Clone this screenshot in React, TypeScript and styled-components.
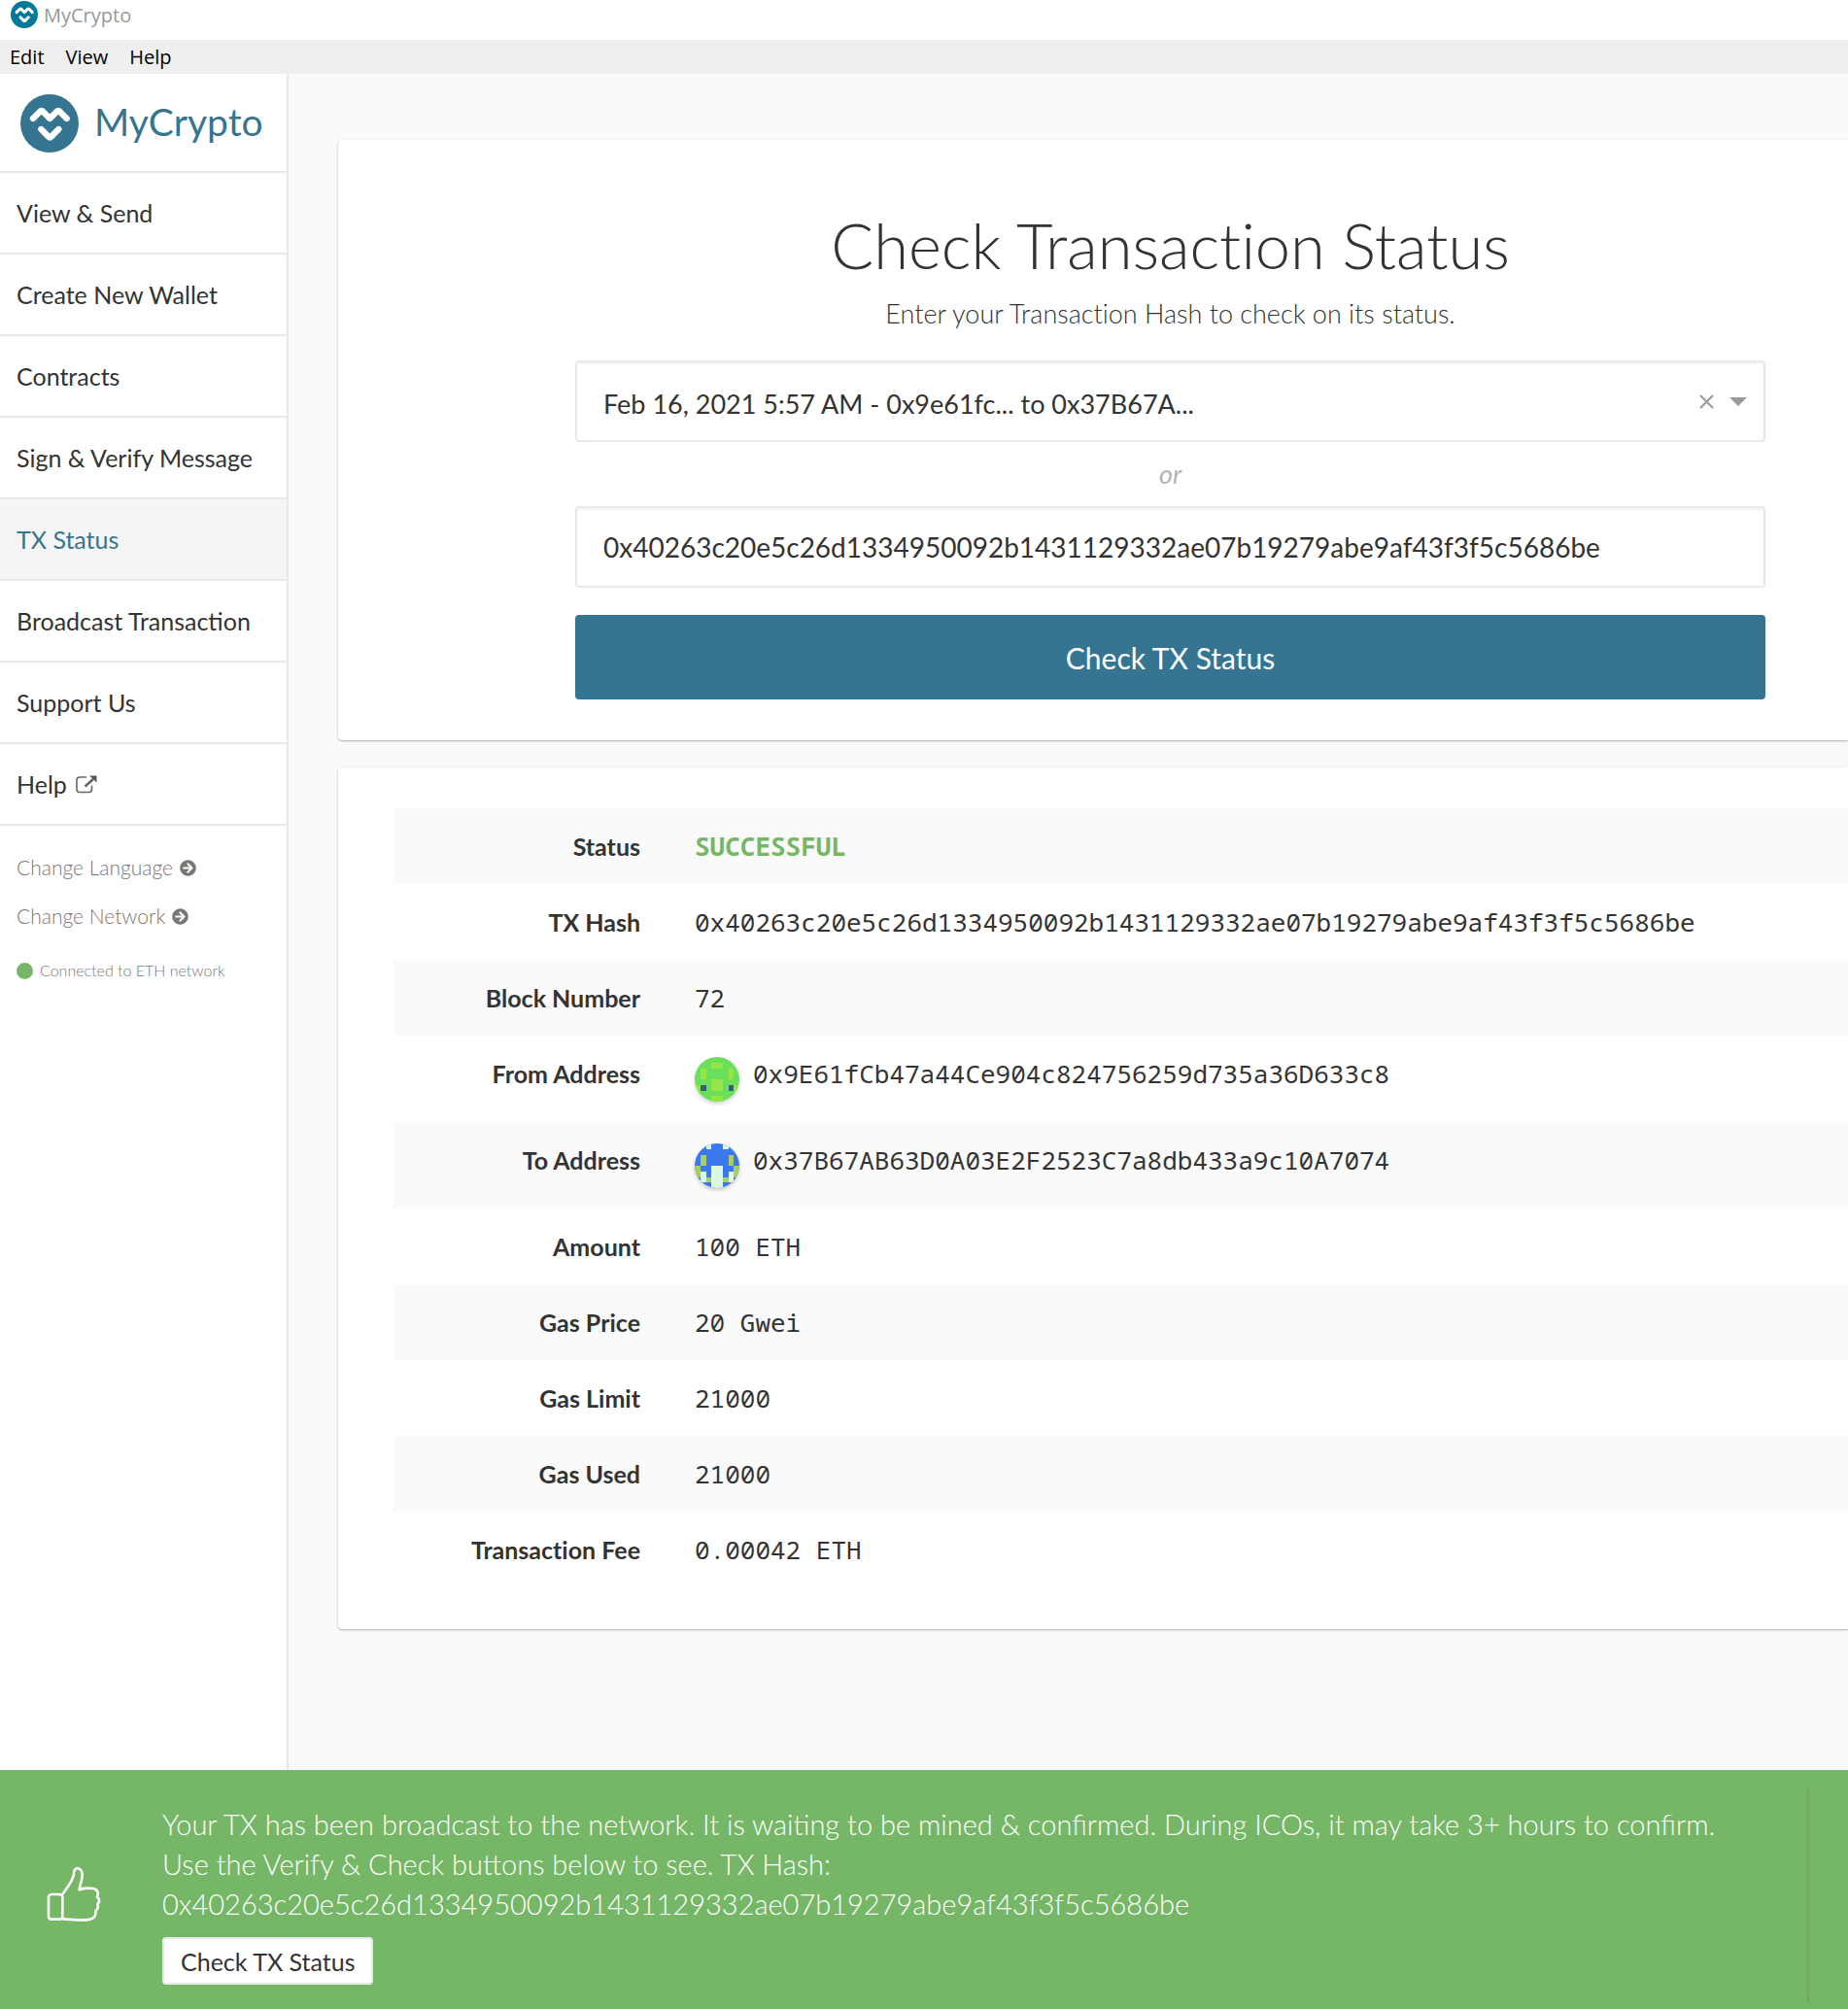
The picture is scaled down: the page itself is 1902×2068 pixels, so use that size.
import React, { useState } from "react";
import styled, { createGlobalStyle } from "styled-components";
import { FaArrowCircleRight } from "react-icons/fa";

const color = {
  primary: "#367591",
  brand: "#027a97",
  success: "#76b667",
  text: "#333333",
  muted: "#777777",
  line: "#e8e8e8",
  field: "#e5eaf0",
  page: "#fafafa",
};

const sans = `Lato, "Open Sans", sans-serif`;
const system = `"Open Sans", "Noto Sans", sans-serif`;
const mono = `"Noto Sans Mono", "Liberation Mono", monospace`;

const GlobalStyle = createGlobalStyle`
  *, *::before, *::after { box-sizing: border-box; }
  body { margin: 0; background: ${color.page}; color: ${color.text}; font-family: ${sans}; }
  button, input, select { font: inherit; color: inherit; margin: 0; }
`;

const Shell = styled.div`
  display: flex;
  flex-direction: column;
  min-height: 100vh;
`;

const TitleBar = styled.header`
  display: flex;
  align-items: flex-start;
  gap: 6px;
  padding: 1px 11px 10px;
  background: #fff;
  color: #999;
  font: 20px/30px ${system};
`;

const MenuBar = styled.nav`
  display: flex;
  gap: 22px;
  padding: 0 10px;
  background: #efefef;
`;

const MenuButton = styled.button`
  && {
    padding: 0;
    border: 0;
    background: none;
    color: #000;
    font: 20px/35px ${system};
  }
`;

const Body = styled.div`
  display: flex;
  flex: 1;
`;

const Sidebar = styled.aside`
  flex: 0 0 297px;
  background: #fff;
  border-right: 2px solid ${color.line};
`;

const Brand = styled.a`
  display: flex;
  align-items: center;
  gap: 16px;
  height: 102px;
  padding: 2px 21px 0;
  border-bottom: 2px solid ${color.line};
  color: ${color.primary};
  font-size: 39px;
  line-height: 48px;
  text-decoration: none;
`;

const BrandName = styled.span`
  padding-bottom: 4px;
`;

const NavLink = styled.a<{ $active?: boolean }>`
  display: flex;
  align-items: center;
  gap: 9px;
  height: 84px;
  padding: 0 17px;
  border-bottom: 2px solid ${color.line};
  background: ${(p) => (p.$active ? "#f5f5f5" : "#fff")};
  color: ${(p) => (p.$active ? color.primary : color.text)};
  font-size: 25px;
  text-decoration: none;
`;

const SidebarFooter = styled.div`
  display: flex;
  flex-direction: column;
  align-items: flex-start;
  padding: 18px 17px;
`;

const FooterButton = styled.button`
  && {
    display: flex;
    align-items: center;
    gap: 7px;
    padding: 0;
    border: 0;
    background: none;
    color: ${color.muted};
    font-size: 21px;
    font-weight: 300;
    line-height: 50px;
  }
`;

const NetworkStatus = styled.p`
  display: flex;
  align-items: center;
  gap: 7px;
  margin: 18px 0 0;
  color: ${color.muted};
  font-size: 16px;
  font-weight: 300;
  line-height: 26px;

  &::before {
    content: "";
    width: 17px;
    height: 17px;
    border-radius: 50%;
    background: ${color.success};
  }
`;

const Main = styled.main`
  display: flex;
  flex: 1;
  flex-direction: column;
  gap: 28px;
  min-width: 0;
  padding: 68px 0 68px 51px;
`;

const Card = styled.section`
  background: #fff;
  border-radius: 4px 0 0 4px;
  box-shadow: 0 1px 2px rgba(0, 0, 0, 0.28), 0 0 4px rgba(0, 0, 0, 0.05);
`;

const FormCard = styled(Card)`
  padding: 72px 85px 42px 244px;
`;

const Title = styled.h1`
  margin: 0 0 17px;
  font-size: 65px;
  font-weight: 300;
  line-height: 72px;
  text-align: center;
  font-variant-ligatures: none;
`;

const Subtitle = styled.p`
  margin: 0 0 30px;
  font-size: 27px;
  font-weight: 300;
  line-height: 36px;
  text-align: center;
  font-variant-ligatures: none;
`;

const Field = styled.div`
  display: flex;
  align-items: center;
  height: 84px;
  border: 2px solid ${color.field};
  border-radius: 4px;
  background: #fff;
  box-shadow: inset 0 2px 1px rgba(0, 0, 0, 0.04);
`;

const SelectField = styled(Field)`
  padding-right: 17px;
`;

const RecentSelect = styled.select`
  && {
    flex: 1;
    min-width: 0;
    height: 100%;
    padding: 4px 0 0 27px;
    border: 0;
    outline: 0;
    background: none;
    appearance: none;
    font-size: 27px;
  }
`;

const ClearButton = styled.button`
  && {
    display: flex;
    margin-right: 16px;
    padding: 0;
    border: 0;
    background: none;
    color: #999;
  }
`;

const HashInput = styled.input`
  && {
    flex: 1;
    min-width: 0;
    height: 100%;
    padding: 0 27px;
    border: 0;
    outline: 0;
    background: none;
    font-size: 28px;
  }
`;

const Or = styled.p`
  margin: 0;
  color: #b3b3b3;
  font-size: 27px;
  font-style: italic;
  line-height: 66px;
  text-align: center;
`;

const SubmitButton = styled.button`
  && {
    width: 100%;
    height: 87px;
    margin-top: 28px;
    border: 0;
    border-radius: 4px;
    background: ${color.primary};
    color: #fff;
    font-size: 30px;
  }
`;

const DetailsCard = styled(Card)`
  padding: 42px 0 43px 57px;
`;

const Details = styled.table`
  width: 100%;
  border-collapse: collapse;
`;

const DetailRow = styled.tr`
  &:nth-child(odd) {
    background: ${color.page};
  }
`;

const DetailLabel = styled.th`
  width: 282px;
  padding: 21px 28px;
  font-size: 25px;
  font-weight: 700;
  line-height: 36px;
  text-align: right;
  vertical-align: top;
  font-variant-ligatures: none;
`;

const DetailValue = styled.td<{ $success?: boolean }>`
  padding: 21px 28px;
  color: ${(p) => (p.$success ? color.success : color.text)};
  font-family: ${mono};
  font-size: 26px;
  font-weight: ${(p) => (p.$success ? 700 : 400)};
  line-height: 36px;
  vertical-align: top;
`;

const Address = styled.div`
  display: flex;
  align-items: flex-start;
  gap: 14px;
`;

const Avatar = styled.span`
  display: flex;
  width: 46px;
  height: 46px;
  margin-top: 1px;
  overflow: hidden;
  border-radius: 50%;
  box-shadow: 0 2px 4px rgba(0, 0, 0, 0.2);
`;

const Notification = styled.aside`
  display: flex;
  align-items: center;
  min-height: 246px;
  background: ${color.success};
  color: #fff;
`;

const NotificationIcon = styled.div`
  display: flex;
  flex: 0 0 167px;
  padding: 10px 0 0 48px;
`;

const NotificationBody = styled.div`
  flex: 1;
  min-width: 0;
  padding: 35px 60px 25px 0;
`;

const Message = styled.p`
  margin: 0 0 14px;
  font-size: 29px;
  font-weight: 300;
  line-height: 41px;
`;

const CheckLink = styled.button`
  && {
    height: 49px;
    padding: 0 17px;
    border: 2px solid ${color.field};
    border-radius: 4px;
    background: #fff;
    color: ${color.text};
    font-size: 25px;
    line-height: 40px;
  }
`;

const NotificationEdge = styled.div`
  align-self: stretch;
  width: 42px;
  margin: 18px 0 7px;
  border-left: 2px solid rgba(0, 0, 0, 0.07);
`;

const LogoMark = ({ size, fill }: { size: number; fill: string }) => (
  <svg width={size} height={size} viewBox="33 22 180 180" aria-hidden="true">
    <circle cx="123" cy="112" r="90" fill={fill} />
    <g fill="none" stroke="#fff" strokeWidth="19" strokeLinecap="round" strokeLinejoin="round">
      <path d="M72 97 93 76Q98 70 103 76L124 97 145 76Q150 70 155 76L176 97" />
      <path d="M97 130 120 153Q124 158 128 153L151 130" />
    </g>
    <path d="M103 128 124 145 145 128 140 146 124 160 108 146Z" fill="#fff" />
  </svg>
);

const ExternalIcon = () => (
  <svg width="22" height="19" viewBox="0 0 22 19" fill="none" stroke="#666" strokeWidth="1.6" aria-hidden="true">
    <path d="M11 2H4Q1 2 1 5v9.500Q1 17.500 4 17.500h9.500Q16.500 17.500 16.500 14.500V10.500" />
    <path d="M9.500 11.500 18 4" strokeWidth="2.600" />
    <path d="M14 .5H21.500V7.500Z" fill="#555" stroke="none" />
  </svg>
);

const ThumbIcon = () => (
  <svg width="56" height="58" viewBox="36 48 168 174" fill="none" stroke="#fff" strokeWidth="8" strokeLinejoin="round" aria-hidden="true">
    <rect x="42" y="135" width="43" height="77" rx="9" />
    <path d="M85 135C95 120 118 92 120 73C117 49 146 47 146 76C146 94 137 108 137 121C148 115 166 115 180 117C195 120 197 132 192 143C201 150 199 160 193 166C197 176 193 182 187 187C190 204 178 213 160 214C133 215 110 212 85 211" />
  </svg>
);

type Pixels = { base: string; cells: [string, number, number, number, number][] };

const fromPixels: Pixels = {
  base: "#6adf59",
  cells: [
    ["#93e646", 3, 1, 2, 1],
    ["#93e646", 1, 2, 1, 2],
    ["#93e646", 6, 2, 1, 2],
    ["#93e646", 3, 4, 2, 2],
    ["#93e646", 0, 5, 1, 1],
    ["#93e646", 7, 5, 1, 1],
    ["#2f6275", 1, 5, 1, 1],
    ["#2f6275", 6, 5, 1, 1],
    ["#93e646", 3, 7, 2, 1],
  ],
};

const toPixels: Pixels = {
  base: "#3b78ee",
  cells: [
    ["#daf8e3", 2, 0, 1, 1],
    ["#daf8e3", 5, 0, 1, 1],
    ["#a8ce66", 1, 2, 1, 2],
    ["#a8ce66", 6, 2, 1, 2],
    ["#a8ce66", 0, 4, 1, 2],
    ["#a8ce66", 7, 4, 1, 2],
    ["#daf8e3", 3, 4, 2, 4],
    ["#daf8e3", 1, 5, 1, 2],
    ["#daf8e3", 6, 5, 1, 2],
    ["#a8ce66", 2, 6, 1, 1],
    ["#a8ce66", 5, 6, 1, 1],
  ],
};

const Identicon = ({ pixels }: { pixels: Pixels }) => (
  <Avatar>
    <svg width="46" height="46" viewBox="0 0 8 8" shapeRendering="crispEdges" aria-hidden="true">
      <rect width="8" height="8" fill={pixels.base} />
      {pixels.cells.map(([fill, x, y, w, h]) => (
        <rect key={`${x}-${y}`} x={x} y={y} width={w} height={h} fill={fill} />
      ))}
    </svg>
  </Avatar>
);

const txHash = "0x40263c20e5c26d1334950092b1431129332ae07b19279abe9af43f3f5c5686be";
const recentTx = "Feb 16, 2021 5:57 AM - 0x9e61fc... to 0x37B67A...";

const navItems = [
  "View & Send",
  "Create New Wallet",
  "Contracts",
  "Sign & Verify Message",
  "TX Status",
  "Broadcast Transaction",
  "Support Us",
];

const details: { label: string; value: string; success?: boolean; pixels?: Pixels }[] = [
  { label: "Status", value: "SUCCESSFUL", success: true },
  { label: "TX Hash", value: txHash },
  { label: "Block Number", value: "72" },
  { label: "From Address", value: "0x9E61fCb47a44Ce904c824756259d735a36D633c8", pixels: fromPixels },
  { label: "To Address", value: "0x37B67AB63D0A03E2F2523C7a8db433a9c10A7074", pixels: toPixels },
  { label: "Amount", value: "100 ETH" },
  { label: "Gas Price", value: "20 Gwei" },
  { label: "Gas Limit", value: "21000" },
  { label: "Gas Used", value: "21000" },
  { label: "Transaction Fee", value: "0.00042 ETH" },
];

export default function App() {
  const [recent, setRecent] = useState(recentTx);
  const [hash, setHash] = useState(txHash);

  return (
    <>
      <GlobalStyle />
      <Shell>
        <TitleBar>
          <LogoMark size={28} fill={color.brand} />
          <span>MyCrypto</span>
        </TitleBar>
        <MenuBar>
          {["Edit", "View", "Help"].map((name) => (
            <MenuButton key={name} type="button">{name}</MenuButton>
          ))}
        </MenuBar>
        <Body>
          <Sidebar>
            <Brand href="#home">
              <LogoMark size={60} fill={color.primary} />
              <BrandName>MyCrypto</BrandName>
            </Brand>
            <nav>
              {navItems.map((name) => (
                <NavLink key={name} href="#nav" $active={name === "TX Status"}>{name}</NavLink>
              ))}
              <NavLink href="#help">
                Help
                <ExternalIcon />
              </NavLink>
            </nav>
            <SidebarFooter>
              <FooterButton type="button">
                Change Language
                <FaArrowCircleRight size={17} />
              </FooterButton>
              <FooterButton type="button">
                Change Network
                <FaArrowCircleRight size={17} />
              </FooterButton>
              <NetworkStatus>Connected to ETH network</NetworkStatus>
            </SidebarFooter>
          </Sidebar>
          <Main>
            <FormCard>
              <form onSubmit={(e) => e.preventDefault()}>
                <Title>Check Transaction Status</Title>
                <Subtitle id="hint">Enter your Transaction Hash to check on its status.</Subtitle>
                <SelectField>
                  <RecentSelect aria-label="Recent transaction" value={recent} onChange={(e) => setRecent(e.target.value)}>
                    <option value=""></option>
                    <option value={recentTx}>{recentTx}</option>
                  </RecentSelect>
                  <ClearButton type="button" aria-label="Clear selection" onClick={() => setRecent("")}>
                    <svg width="15" height="15" viewBox="0 0 15 15" stroke="currentColor" strokeWidth="2" aria-hidden="true">
                      <path d="M1 1 14 14M14 1 1 14" />
                    </svg>
                  </ClearButton>
                  <svg width="18" height="9" viewBox="0 0 18 9" fill="#999" aria-hidden="true">
                    <path d="M0 0H18L9 9Z" />
                  </svg>
                </SelectField>
                <Or>or</Or>
                <Field>
                  <HashInput type="text" aria-labelledby="hint" spellCheck={false} value={hash} onChange={(e) => setHash(e.target.value)} />
                </Field>
                <SubmitButton type="submit">Check TX Status</SubmitButton>
              </form>
            </FormCard>
            <DetailsCard>
              <Details>
                <tbody>
                  {details.map(({ label, value, success, pixels }) => (
                    <DetailRow key={label}>
                      <DetailLabel scope="row">{label}</DetailLabel>
                      <DetailValue $success={success}>
                        {pixels ? (
                          <Address>
                            <Identicon pixels={pixels} />
                            {value}
                          </Address>
                        ) : (
                          value
                        )}
                      </DetailValue>
                    </DetailRow>
                  ))}
                </tbody>
              </Details>
            </DetailsCard>
          </Main>
        </Body>
        <Notification>
          <NotificationIcon>
            <ThumbIcon />
          </NotificationIcon>
          <NotificationBody>
            <Message>
              Your TX has been broadcast to the network. It is waiting to be mined &amp; confirmed. During ICOs, it may
              take 3+ hours to confirm. Use the Verify &amp; Check buttons below to see. TX Hash: {txHash}
            </Message>
            <CheckLink type="button">Check TX Status</CheckLink>
          </NotificationBody>
          <NotificationEdge />
        </Notification>
      </Shell>
    </>
  );
}
